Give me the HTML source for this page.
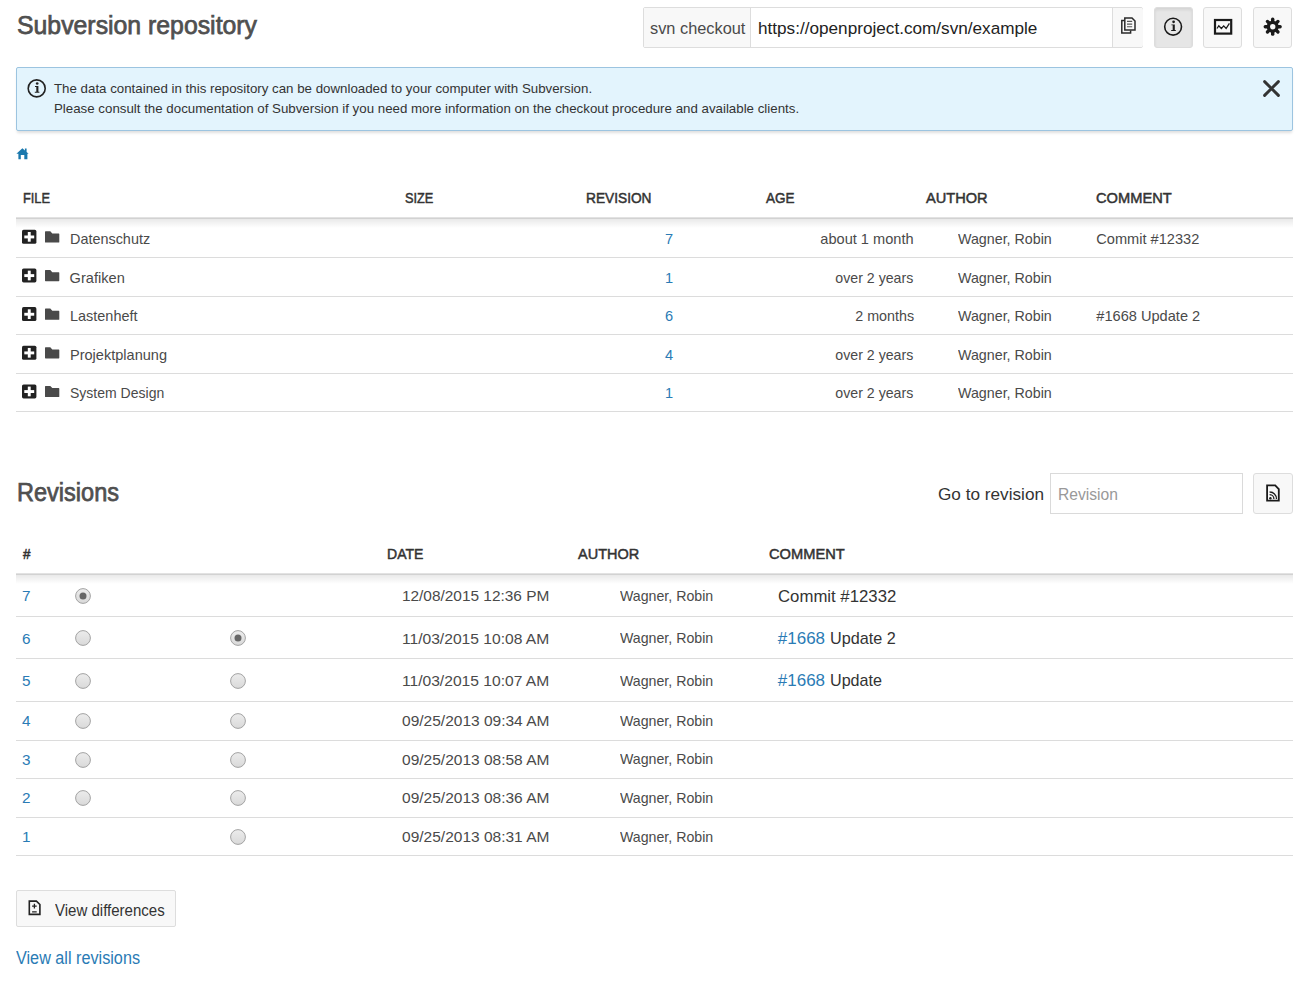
<!DOCTYPE html>
<html><head><meta charset="utf-8"><title>Subversion repository</title>
<style>
html,body{margin:0;padding:0;background:#fff;width:1303px;height:1004px;overflow:hidden;position:relative}
.t{position:absolute;font-family:"Liberation Sans", sans-serif;line-height:1;white-space:nowrap}
</style></head><body>
<div style='position:absolute;left:643px;top:7px;width:500px;height:41px;box-sizing:border-box;border:1px solid #ddd;border-radius:2px;background:#fff'></div>
<div style='position:absolute;left:644px;top:8px;width:106px;height:39px;background:#f8f8f8;border-right:1px solid #ddd'></div>
<div style='position:absolute;left:1112px;top:8px;width:30px;height:39px;background:#f8f8f8;border-left:1px solid #ddd;border-radius:0 2px 2px 0'></div>
<div style='position:absolute;left:1154px;top:7px;width:39px;height:41px;box-sizing:border-box;border:1px solid #ddd;border-radius:3px;background:#e6e6e6;box-shadow:inset 0 2px 3px rgba(0,0,0,.08);'></div>
<div style='position:absolute;left:1203px;top:7px;width:39px;height:41px;box-sizing:border-box;border:1px solid #ddd;border-radius:3px;background:#f8f8f8;'></div>
<div style='position:absolute;left:1253px;top:7px;width:39px;height:41px;box-sizing:border-box;border:1px solid #ddd;border-radius:3px;background:#f8f8f8;'></div>
<div style='position:absolute;left:16px;top:67px;width:1277px;height:64px;box-sizing:border-box;border:1px solid #9cc4e0;border-radius:2px;background:#e3f4fd;box-shadow:0 3px 3px -1px rgba(0,0,0,.13)'></div>
<div style='position:absolute;left:16px;top:217px;width:1277px;height:1px;background:#e2e2e2'></div>
<div style='position:absolute;left:16px;top:218px;width:1277px;height:1px;background:#d2d2d2'></div>
<div style='position:absolute;left:16px;top:219px;width:1277px;height:9px;background:linear-gradient(rgba(0,0,0,.085),rgba(0,0,0,0))'></div>
<div style='position:absolute;left:16px;top:257.00px;width:1277px;height:1px;background:#dcdcdc'></div>
<div style='position:absolute;left:16px;top:295.60px;width:1277px;height:1px;background:#dcdcdc'></div>
<div style='position:absolute;left:16px;top:334.20px;width:1277px;height:1px;background:#dcdcdc'></div>
<div style='position:absolute;left:16px;top:372.80px;width:1277px;height:1px;background:#dcdcdc'></div>
<div style='position:absolute;left:16px;top:411.40px;width:1277px;height:1px;background:#dcdcdc'></div>
<div style='position:absolute;left:16px;top:573px;width:1277px;height:1px;background:#e2e2e2'></div>
<div style='position:absolute;left:16px;top:574px;width:1277px;height:1px;background:#d2d2d2'></div>
<div style='position:absolute;left:16px;top:575px;width:1277px;height:9px;background:linear-gradient(rgba(0,0,0,.085),rgba(0,0,0,0))'></div>
<div style='position:absolute;left:16px;top:615.90px;width:1277px;height:1px;background:#dcdcdc'></div>
<div style='position:absolute;left:16px;top:658.00px;width:1277px;height:1px;background:#dcdcdc'></div>
<div style='position:absolute;left:16px;top:700.90px;width:1277px;height:1px;background:#dcdcdc'></div>
<div style='position:absolute;left:16px;top:739.50px;width:1277px;height:1px;background:#dcdcdc'></div>
<div style='position:absolute;left:16px;top:778.00px;width:1277px;height:1px;background:#dcdcdc'></div>
<div style='position:absolute;left:16px;top:816.60px;width:1277px;height:1px;background:#dcdcdc'></div>
<div style='position:absolute;left:16px;top:855.10px;width:1277px;height:1px;background:#dcdcdc'></div>
<div style='position:absolute;left:1050px;top:473px;width:193px;height:41px;box-sizing:border-box;border:1px solid #dadada;background:#fff'></div>
<div style='position:absolute;left:1253px;top:473px;width:40px;height:41px;box-sizing:border-box;border:1px solid #ddd;border-radius:3px;background:#f8f8f8'></div>
<div style='position:absolute;left:16px;top:890px;width:160px;height:37px;box-sizing:border-box;border:1px solid #ddd;border-radius:2px;background:#f8f8f8'></div>
<svg style='position:absolute;left:75.20px;top:587.70px' width='16' height='16' viewBox='0 0 16 16'><defs><linearGradient id='g083' x1='0' y1='0' x2='0' y2='1'><stop offset='0' stop-color='#ececec'/><stop offset='1' stop-color='#d9d9d9'/></linearGradient></defs><circle cx='8' cy='8' r='7.4' fill='url(#g083)' stroke='#a3a3a3' stroke-width='1'/><circle cx='8' cy='8' r='3.5' fill='#666'/></svg>
<svg style='position:absolute;left:75.20px;top:630.00px' width='16' height='16' viewBox='0 0 16 16'><defs><linearGradient id='g183' x1='0' y1='0' x2='0' y2='1'><stop offset='0' stop-color='#ececec'/><stop offset='1' stop-color='#d9d9d9'/></linearGradient></defs><circle cx='8' cy='8' r='7.4' fill='url(#g183)' stroke='#a3a3a3' stroke-width='1'/></svg>
<svg style='position:absolute;left:230.30px;top:630.00px' width='16' height='16' viewBox='0 0 16 16'><defs><linearGradient id='g1238' x1='0' y1='0' x2='0' y2='1'><stop offset='0' stop-color='#ececec'/><stop offset='1' stop-color='#d9d9d9'/></linearGradient></defs><circle cx='8' cy='8' r='7.4' fill='url(#g1238)' stroke='#a3a3a3' stroke-width='1'/><circle cx='8' cy='8' r='3.5' fill='#666'/></svg>
<svg style='position:absolute;left:75.20px;top:672.70px' width='16' height='16' viewBox='0 0 16 16'><defs><linearGradient id='g283' x1='0' y1='0' x2='0' y2='1'><stop offset='0' stop-color='#ececec'/><stop offset='1' stop-color='#d9d9d9'/></linearGradient></defs><circle cx='8' cy='8' r='7.4' fill='url(#g283)' stroke='#a3a3a3' stroke-width='1'/></svg>
<svg style='position:absolute;left:230.30px;top:672.70px' width='16' height='16' viewBox='0 0 16 16'><defs><linearGradient id='g2238' x1='0' y1='0' x2='0' y2='1'><stop offset='0' stop-color='#ececec'/><stop offset='1' stop-color='#d9d9d9'/></linearGradient></defs><circle cx='8' cy='8' r='7.4' fill='url(#g2238)' stroke='#a3a3a3' stroke-width='1'/></svg>
<svg style='position:absolute;left:75.20px;top:712.80px' width='16' height='16' viewBox='0 0 16 16'><defs><linearGradient id='g383' x1='0' y1='0' x2='0' y2='1'><stop offset='0' stop-color='#ececec'/><stop offset='1' stop-color='#d9d9d9'/></linearGradient></defs><circle cx='8' cy='8' r='7.4' fill='url(#g383)' stroke='#a3a3a3' stroke-width='1'/></svg>
<svg style='position:absolute;left:230.30px;top:712.80px' width='16' height='16' viewBox='0 0 16 16'><defs><linearGradient id='g3238' x1='0' y1='0' x2='0' y2='1'><stop offset='0' stop-color='#ececec'/><stop offset='1' stop-color='#d9d9d9'/></linearGradient></defs><circle cx='8' cy='8' r='7.4' fill='url(#g3238)' stroke='#a3a3a3' stroke-width='1'/></svg>
<svg style='position:absolute;left:75.20px;top:751.60px' width='16' height='16' viewBox='0 0 16 16'><defs><linearGradient id='g483' x1='0' y1='0' x2='0' y2='1'><stop offset='0' stop-color='#ececec'/><stop offset='1' stop-color='#d9d9d9'/></linearGradient></defs><circle cx='8' cy='8' r='7.4' fill='url(#g483)' stroke='#a3a3a3' stroke-width='1'/></svg>
<svg style='position:absolute;left:230.30px;top:751.60px' width='16' height='16' viewBox='0 0 16 16'><defs><linearGradient id='g4238' x1='0' y1='0' x2='0' y2='1'><stop offset='0' stop-color='#ececec'/><stop offset='1' stop-color='#d9d9d9'/></linearGradient></defs><circle cx='8' cy='8' r='7.4' fill='url(#g4238)' stroke='#a3a3a3' stroke-width='1'/></svg>
<svg style='position:absolute;left:75.20px;top:790.00px' width='16' height='16' viewBox='0 0 16 16'><defs><linearGradient id='g583' x1='0' y1='0' x2='0' y2='1'><stop offset='0' stop-color='#ececec'/><stop offset='1' stop-color='#d9d9d9'/></linearGradient></defs><circle cx='8' cy='8' r='7.4' fill='url(#g583)' stroke='#a3a3a3' stroke-width='1'/></svg>
<svg style='position:absolute;left:230.30px;top:790.00px' width='16' height='16' viewBox='0 0 16 16'><defs><linearGradient id='g5238' x1='0' y1='0' x2='0' y2='1'><stop offset='0' stop-color='#ececec'/><stop offset='1' stop-color='#d9d9d9'/></linearGradient></defs><circle cx='8' cy='8' r='7.4' fill='url(#g5238)' stroke='#a3a3a3' stroke-width='1'/></svg>
<svg style='position:absolute;left:230.30px;top:829.00px' width='16' height='16' viewBox='0 0 16 16'><defs><linearGradient id='g6238' x1='0' y1='0' x2='0' y2='1'><stop offset='0' stop-color='#ececec'/><stop offset='1' stop-color='#d9d9d9'/></linearGradient></defs><circle cx='8' cy='8' r='7.4' fill='url(#g6238)' stroke='#a3a3a3' stroke-width='1'/></svg>
<svg style='position:absolute;left:0;top:0;overflow:visible' width='1' height='1'><circle cx='36.7' cy='88.4' r='8.5' fill='none' stroke='#222' stroke-width='1.6'/><circle cx='37.2' cy='83.5' r='1.35' fill='#222'/><path d='M35.00,86.10 H38.40 V91.80 H39.40 V92.70 H34.80 V91.80 H36.30 V87.00 H35.00 Z' fill='#222'/></svg>
<svg style='position:absolute;left:0;top:0;overflow:visible' width='1' height='1'><circle cx='1173.1' cy='26.7' r='8.4' fill='none' stroke='#1a1a1a' stroke-width='1.6'/><circle cx='1173.6' cy='21.799999999999997' r='1.35' fill='#1a1a1a'/><path d='M1171.40,24.40 H1174.80 V30.10 H1175.80 V31.00 H1171.20 V30.10 H1172.70 V25.30 H1171.40 Z' fill='#1a1a1a'/></svg>
<svg style='position:absolute;left:0;top:0;overflow:visible' width='1' height='1'><path d='M1264.6,81.6 L1278.4,95.4 M1278.4,81.6 L1264.6,95.4' stroke='#333' stroke-width='2.9' stroke-linecap='round'/></svg>
<svg style='position:absolute;left:0;top:0;overflow:visible' width='1' height='1'><path d='M16.4,153.7 L22.4,148.3 L24.9,150.5 V148.4 H26.6 V152.1 L28.6,153.7 H27.4 V159.3 H24.3 V155 H20.8 V159.3 H18.4 V153.7 Z' fill='#1a78ad'/></svg>
<svg style='position:absolute;left:0;top:0;overflow:visible' width='1' height='1'><rect x='22' y='229.80' width='14.4' height='14' rx='1.6' fill='#222'/><rect x='24.3' y='235.50' width='9.9' height='2.9' fill='#fff'/><rect x='27.8' y='232.00' width='2.9' height='9.7' fill='#fff'/><path d='M45.6,231.30 H50.3 L52.3,233.50 H58.7 Q59.3,233.50 59.3,234.10 V241.90 Q59.3,242.50 58.7,242.50 H45.6 Q45,242.50 45,241.90 V231.90 Q45,231.30 45.6,231.30 Z' fill='#4a4a4a'/></svg>
<svg style='position:absolute;left:0;top:0;overflow:visible' width='1' height='1'><rect x='22' y='268.45' width='14.4' height='14' rx='1.6' fill='#222'/><rect x='24.3' y='274.15' width='9.9' height='2.9' fill='#fff'/><rect x='27.8' y='270.65' width='2.9' height='9.7' fill='#fff'/><path d='M45.6,269.95 H50.3 L52.3,272.15 H58.7 Q59.3,272.15 59.3,272.75 V280.55 Q59.3,281.15 58.7,281.15 H45.6 Q45,281.15 45,280.55 V270.55 Q45,269.95 45.6,269.95 Z' fill='#4a4a4a'/></svg>
<svg style='position:absolute;left:0;top:0;overflow:visible' width='1' height='1'><rect x='22' y='307.10' width='14.4' height='14' rx='1.6' fill='#222'/><rect x='24.3' y='312.80' width='9.9' height='2.9' fill='#fff'/><rect x='27.8' y='309.30' width='2.9' height='9.7' fill='#fff'/><path d='M45.6,308.60 H50.3 L52.3,310.80 H58.7 Q59.3,310.80 59.3,311.40 V319.20 Q59.3,319.80 58.7,319.80 H45.6 Q45,319.80 45,319.20 V309.20 Q45,308.60 45.6,308.60 Z' fill='#4a4a4a'/></svg>
<svg style='position:absolute;left:0;top:0;overflow:visible' width='1' height='1'><rect x='22' y='345.75' width='14.4' height='14' rx='1.6' fill='#222'/><rect x='24.3' y='351.45' width='9.9' height='2.9' fill='#fff'/><rect x='27.8' y='347.95' width='2.9' height='9.7' fill='#fff'/><path d='M45.6,347.25 H50.3 L52.3,349.45 H58.7 Q59.3,349.45 59.3,350.05 V357.85 Q59.3,358.45 58.7,358.45 H45.6 Q45,358.45 45,357.85 V347.85 Q45,347.25 45.6,347.25 Z' fill='#4a4a4a'/></svg>
<svg style='position:absolute;left:0;top:0;overflow:visible' width='1' height='1'><rect x='22' y='384.40' width='14.4' height='14' rx='1.6' fill='#222'/><rect x='24.3' y='390.10' width='9.9' height='2.9' fill='#fff'/><rect x='27.8' y='386.60' width='2.9' height='9.7' fill='#fff'/><path d='M45.6,385.90 H50.3 L52.3,388.10 H58.7 Q59.3,388.10 59.3,388.70 V396.50 Q59.3,397.10 58.7,397.10 H45.6 Q45,397.10 45,396.50 V386.50 Q45,385.90 45.6,385.90 Z' fill='#4a4a4a'/></svg>
<svg style='position:absolute;left:0;top:0;overflow:visible' width='1' height='1'><g fill='none' stroke='#2a2a2a' stroke-width='1.5'><path d='M1124.6,20.4 H1121.8 V33 H1130.6 V30.4'/><path d='M1124.8,17.9 H1132 L1135,21 V30.1 H1124.8 Z'/><path d='M1127,21.4 H1132.2 M1127,24.1 H1132.2 M1127,26.8 H1132.2' stroke-width='1.1' stroke='#555'/></g></svg>
<svg style='position:absolute;left:0;top:0;overflow:visible' width='1' height='1'><g fill='none' stroke='#1a1a1a'><rect x='1215' y='20' width='16.2' height='13.6' stroke-width='2.2'/><polyline points='1217,28.5 1218.8,25.7 1221.4,28.5 1223.7,25.9 1226.1,28.5 1229.4,23.3' stroke-width='1.3'/></g></svg>
<svg style='position:absolute;left:0;top:0;overflow:visible' width='1' height='1'><g transform='translate(1272.7,26.7)' fill='#1a1a1a'><rect x='-1.7' y='-9.1' width='3.4' height='5.5' rx='1.6' transform='rotate(0)'/><rect x='-1.7' y='-9.1' width='3.4' height='5.5' rx='1.6' transform='rotate(45)'/><rect x='-1.7' y='-9.1' width='3.4' height='5.5' rx='1.6' transform='rotate(90)'/><rect x='-1.7' y='-9.1' width='3.4' height='5.5' rx='1.6' transform='rotate(135)'/><rect x='-1.7' y='-9.1' width='3.4' height='5.5' rx='1.6' transform='rotate(180)'/><rect x='-1.7' y='-9.1' width='3.4' height='5.5' rx='1.6' transform='rotate(225)'/><rect x='-1.7' y='-9.1' width='3.4' height='5.5' rx='1.6' transform='rotate(270)'/><rect x='-1.7' y='-9.1' width='3.4' height='5.5' rx='1.6' transform='rotate(315)'/><circle r='6'/><circle r='2.7' fill='#f8f8f8'/></g></svg>
<svg style='position:absolute;left:0;top:0;overflow:visible' width='1' height='1'><g fill='none' stroke='#1a1a1a'><path d='M1267.1,485.3 H1275.2 L1278.8,489 V500.6 H1267.1 Z' stroke-width='1.8'/><path d='M1269.6,494.6 A4.3,4.3 0 0 1 1273.9,498.9 M1269.6,492 A6.9,6.9 0 0 1 1276.5,498.9' stroke-width='1.3'/></g><circle cx='1270.4' cy='498.2' r='1.2' fill='#1a1a1a'/></svg>
<svg style='position:absolute;left:0;top:0;overflow:visible' width='1' height='1'><g fill='none' stroke='#222'><path d='M29.3,901.1 H36.4 L39.9,904.5 V914.4 H29.3 Z' stroke-width='1.6'/><path d='M32.1,906.1 H36.7 M34.4,903.8 V908.4 M32.1,911.8 H36.7' stroke-width='1.3'/></g></svg>
<div class='t' style='top:12.94px;font-size:25.6px;color:#505050;-webkit-text-stroke:0.75px #505050;left:17.00px;transform:scaleX(0.9696);transform-origin:0 0;'>Subversion repository</div>
<div class='t' style='top:19.98px;font-size:16.5px;color:#4a4a4a;left:649.60px;transform:scaleX(0.9905);transform-origin:0 0;'>svn checkout</div>
<div class='t' style='top:19.64px;font-size:16.3px;color:#222;left:758.00px;transform:scaleX(1.0537);transform-origin:0 0;'>https://openproject.com/svn/example</div>
<div class='t' style='top:81.69px;font-size:13.3px;color:#333;left:54.00px;'>The data contained in this repository can be downloaded to your computer with Subversion.</div>
<div class='t' style='top:102.40px;font-size:13.3px;color:#333;left:54.00px;'>Please consult the documentation of Subversion if you need more information on the checkout procedure and available clients.</div>
<div class='t' style='top:190.15px;font-size:15px;color:#333;-webkit-text-stroke:0.5px #333;left:23.00px;transform:scaleX(0.8521);transform-origin:0 0;'>FILE</div>
<div class='t' style='top:190.15px;font-size:15px;color:#333;-webkit-text-stroke:0.5px #333;left:404.60px;transform:scaleX(0.8517);transform-origin:0 0;'>SIZE</div>
<div class='t' style='top:190.15px;font-size:15px;color:#333;-webkit-text-stroke:0.5px #333;left:585.50px;transform:scaleX(0.9137);transform-origin:0 0;'>REVISION</div>
<div class='t' style='top:190.15px;font-size:15px;color:#333;-webkit-text-stroke:0.5px #333;left:765.50px;transform:scaleX(0.8994);transform-origin:0 0;'>AGE</div>
<div class='t' style='top:190.15px;font-size:15px;color:#333;-webkit-text-stroke:0.5px #333;left:926.00px;transform:scaleX(0.9725);transform-origin:0 0;'>AUTHOR</div>
<div class='t' style='top:190.15px;font-size:15px;color:#333;-webkit-text-stroke:0.5px #333;left:1096.30px;transform:scaleX(0.9768);transform-origin:0 0;'>COMMENT</div>
<div class='t' style='top:231.99px;font-size:14.6px;color:#4a4a4a;left:69.60px;transform:scaleX(0.9875);transform-origin:0 0;'>Datenschutz</div>
<div class='t' style='top:231.99px;font-size:14.6px;color:#2a7bb5;left:664.98px;'>7</div>
<div class='t' style='top:231.99px;font-size:14.6px;color:#4a4a4a;left:820.29px;'>about 1 month</div>
<div class='t' style='top:231.99px;font-size:14.6px;color:#4a4a4a;left:958.20px;transform:scaleX(0.9771);transform-origin:0 0;'>Wagner, Robin</div>
<div class='t' style='top:231.99px;font-size:14.6px;color:#4a4a4a;left:1096.30px;'>Commit #12332</div>
<div class='t' style='top:270.59px;font-size:14.6px;color:#4a4a4a;left:69.60px;'>Grafiken</div>
<div class='t' style='top:270.59px;font-size:14.6px;color:#2a7bb5;left:664.98px;'>1</div>
<div class='t' style='top:270.59px;font-size:14.6px;color:#4a4a4a;left:833.29px;transform:scaleX(0.9710);transform-origin:100% 0;'>over 2 years</div>
<div class='t' style='top:270.59px;font-size:14.6px;color:#4a4a4a;left:958.20px;transform:scaleX(0.9771);transform-origin:0 0;'>Wagner, Robin</div>
<div class='t' style='top:309.19px;font-size:14.6px;color:#4a4a4a;left:69.60px;transform:scaleX(0.9900);transform-origin:0 0;'>Lastenheft</div>
<div class='t' style='top:309.19px;font-size:14.6px;color:#2a7bb5;left:664.98px;'>6</div>
<div class='t' style='top:309.19px;font-size:14.6px;color:#4a4a4a;left:853.57px;transform:scaleX(0.9800);transform-origin:100% 0;'>2 months</div>
<div class='t' style='top:309.19px;font-size:14.6px;color:#4a4a4a;left:958.20px;transform:scaleX(0.9771);transform-origin:0 0;'>Wagner, Robin</div>
<div class='t' style='top:309.19px;font-size:14.6px;color:#4a4a4a;left:1096.30px;'>#1668 Update 2</div>
<div class='t' style='top:347.79px;font-size:14.6px;color:#4a4a4a;left:69.60px;transform:scaleX(0.9960);transform-origin:0 0;'>Projektplanung</div>
<div class='t' style='top:347.79px;font-size:14.6px;color:#2a7bb5;left:664.98px;'>4</div>
<div class='t' style='top:347.79px;font-size:14.6px;color:#4a4a4a;left:833.29px;transform:scaleX(0.9710);transform-origin:100% 0;'>over 2 years</div>
<div class='t' style='top:347.79px;font-size:14.6px;color:#4a4a4a;left:958.20px;transform:scaleX(0.9771);transform-origin:0 0;'>Wagner, Robin</div>
<div class='t' style='top:386.39px;font-size:14.6px;color:#4a4a4a;left:69.60px;transform:scaleX(0.9600);transform-origin:0 0;'>System Design</div>
<div class='t' style='top:386.39px;font-size:14.6px;color:#2a7bb5;left:664.98px;'>1</div>
<div class='t' style='top:386.39px;font-size:14.6px;color:#4a4a4a;left:833.29px;transform:scaleX(0.9710);transform-origin:100% 0;'>over 2 years</div>
<div class='t' style='top:386.39px;font-size:14.6px;color:#4a4a4a;left:958.20px;transform:scaleX(0.9771);transform-origin:0 0;'>Wagner, Robin</div>
<div class='t' style='top:479.10px;font-size:26px;color:#505050;-webkit-text-stroke:0.75px #505050;left:16.70px;transform:scaleX(0.9049);transform-origin:0 0;'>Revisions</div>
<div class='t' style='top:485.80px;font-size:17.3px;color:#333;left:937.60px;transform:scaleX(0.9941);transform-origin:0 0;'>Go to revision</div>
<div class='t' style='top:485.81px;font-size:17.4px;color:#999;left:1057.60px;transform:scaleX(0.8995);transform-origin:0 0;'>Revision</div>
<div class='t' style='top:546.25px;font-size:15px;color:#333;-webkit-text-stroke:0.5px #333;left:22.50px;transform:scaleX(0.8989);transform-origin:0 0;'>#</div>
<div class='t' style='top:546.25px;font-size:15px;color:#333;-webkit-text-stroke:0.5px #333;left:387.30px;transform:scaleX(0.9356);transform-origin:0 0;'>DATE</div>
<div class='t' style='top:546.25px;font-size:15px;color:#333;-webkit-text-stroke:0.5px #333;left:578.40px;transform:scaleX(0.9662);transform-origin:0 0;'>AUTHOR</div>
<div class='t' style='top:546.25px;font-size:15px;color:#333;-webkit-text-stroke:0.5px #333;left:769.00px;transform:scaleX(0.9768);transform-origin:0 0;'>COMMENT</div>
<div class='t' style='top:588.00px;font-size:15.3px;color:#2a7bb5;left:21.90px;'>7</div>
<div class='t' style='top:588.00px;font-size:15.3px;color:#4a4a4a;left:403.00px;transform:scaleX(1.0075);transform-origin:100% 0;'>12/08/2015 12:36 PM</div>
<div class='t' style='top:588.59px;font-size:14.6px;color:#4a4a4a;left:620.20px;transform:scaleX(0.9708);transform-origin:0 0;'>Wagner, Robin</div>
<div class='t' style='top:588.05px;font-size:17px;color:#333;left:777.80px;transform:scaleX(0.9857);transform-origin:0 0;'>Commit #12332</div>
<div class='t' style='top:630.50px;font-size:15.3px;color:#2a7bb5;left:21.90px;'>6</div>
<div class='t' style='top:630.50px;font-size:15.3px;color:#4a4a4a;left:404.99px;transform:scaleX(1.0214);transform-origin:100% 0;'>11/03/2015 10:08 AM</div>
<div class='t' style='top:631.09px;font-size:14.6px;color:#4a4a4a;left:620.20px;transform:scaleX(0.9708);transform-origin:0 0;'>Wagner, Robin</div>
<div class='t' style='top:629.75px;font-size:17px;color:#2a7bb5;left:777.80px;'>#1668</div>
<div class='t' style='top:629.75px;font-size:17px;color:#333;left:830.40px;transform:scaleX(0.9522);transform-origin:0 0;'>Update 2</div>
<div class='t' style='top:673.00px;font-size:15.3px;color:#2a7bb5;left:21.90px;'>5</div>
<div class='t' style='top:673.00px;font-size:15.3px;color:#4a4a4a;left:404.99px;transform:scaleX(1.0214);transform-origin:100% 0;'>11/03/2015 10:07 AM</div>
<div class='t' style='top:673.59px;font-size:14.6px;color:#4a4a4a;left:620.20px;transform:scaleX(0.9708);transform-origin:0 0;'>Wagner, Robin</div>
<div class='t' style='top:671.95px;font-size:17px;color:#2a7bb5;left:777.80px;'>#1668</div>
<div class='t' style='top:671.95px;font-size:17px;color:#333;left:830.40px;transform:scaleX(0.9484);transform-origin:0 0;'>Update</div>
<div class='t' style='top:713.20px;font-size:15.3px;color:#2a7bb5;left:21.90px;'>4</div>
<div class='t' style='top:713.20px;font-size:15.3px;color:#4a4a4a;left:403.85px;transform:scaleX(1.0134);transform-origin:100% 0;'>09/25/2013 09:34 AM</div>
<div class='t' style='top:713.79px;font-size:14.6px;color:#4a4a4a;left:620.20px;transform:scaleX(0.9708);transform-origin:0 0;'>Wagner, Robin</div>
<div class='t' style='top:751.70px;font-size:15.3px;color:#2a7bb5;left:21.90px;'>3</div>
<div class='t' style='top:751.70px;font-size:15.3px;color:#4a4a4a;left:403.85px;transform:scaleX(1.0134);transform-origin:100% 0;'>09/25/2013 08:58 AM</div>
<div class='t' style='top:752.29px;font-size:14.6px;color:#4a4a4a;left:620.20px;transform:scaleX(0.9708);transform-origin:0 0;'>Wagner, Robin</div>
<div class='t' style='top:790.00px;font-size:15.3px;color:#2a7bb5;left:21.90px;'>2</div>
<div class='t' style='top:790.00px;font-size:15.3px;color:#4a4a4a;left:403.85px;transform:scaleX(1.0134);transform-origin:100% 0;'>09/25/2013 08:36 AM</div>
<div class='t' style='top:790.59px;font-size:14.6px;color:#4a4a4a;left:620.20px;transform:scaleX(0.9708);transform-origin:0 0;'>Wagner, Robin</div>
<div class='t' style='top:829.00px;font-size:15.3px;color:#2a7bb5;left:21.90px;'>1</div>
<div class='t' style='top:829.00px;font-size:15.3px;color:#4a4a4a;left:403.85px;transform:scaleX(1.0134);transform-origin:100% 0;'>09/25/2013 08:31 AM</div>
<div class='t' style='top:829.59px;font-size:14.6px;color:#4a4a4a;left:620.20px;transform:scaleX(0.9708);transform-origin:0 0;'>Wagner, Robin</div>
<div class='t' style='top:902.84px;font-size:15.6px;color:#333;left:55.30px;transform:scaleX(0.9635);transform-origin:0 0;'>View differences</div>
<div class='t' style='top:949.92px;font-size:17.5px;color:#2a7bb5;left:16.40px;transform:scaleX(0.9260);transform-origin:0 0;'>View all revisions</div>
</body></html>
